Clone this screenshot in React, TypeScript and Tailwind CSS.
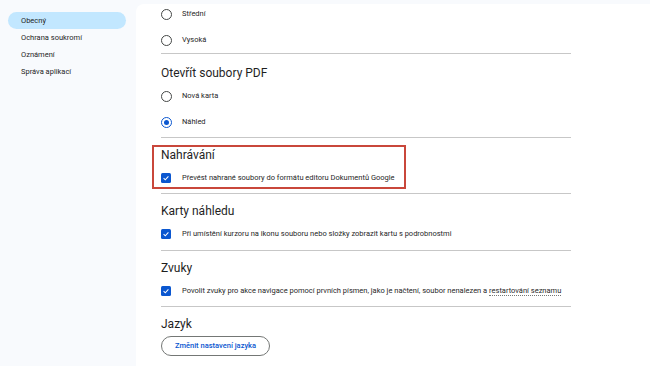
import React from 'react'

const font = { fontFamily: 'Roboto, "Noto Sans", sans-serif' }

function Radio({ checked = false, label }: { checked?: boolean; label: string }) {
  return (
    <div className="flex h-[26px] items-center">
      <span
        className={
          checked
            ? 'flex h-[11px] w-[11px] items-center justify-center rounded-full border-[1.5px] border-[#0b57d0]'
            : 'flex h-[11px] w-[11px] items-center justify-center rounded-full border-[1.5px] border-[#444746]'
        }
      >
        {checked && <span className="h-[5px] w-[5px] rounded-full bg-[#0b57d0]" />}
      </span>
      <span className="ml-[10px] text-[7.5px] text-[#1f1f1f]">{label}</span>
    </div>
  )
}

function Check({ children }: { children: React.ReactNode }) {
  return (
    <div className="flex h-[26px] items-center">
      <span className="flex h-[10px] w-[10px] shrink-0 items-center justify-center rounded-[1.5px] bg-[#0b57d0]">
        <svg viewBox="0 0 10 10" className="h-[8px] w-[8px]">
          <path d="M2 5.2 L4.1 7.2 L8 3" fill="none" stroke="white" strokeWidth="1.3" />
        </svg>
      </span>
      <span className="ml-[11px] whitespace-nowrap text-[7.5px] text-[#1f1f1f]">{children}</span>
    </div>
  )
}

function Divider() {
  return <div className="h-px w-[410px] bg-[#c7c7c7]" />
}

function Heading({ children }: { children: React.ReactNode }) {
  return <div className="mb-[2px] pt-[9px] text-[12px] leading-[16px] text-[#1f1f1f]">{children}</div>
}

const nav = ['Obecný', 'Ochrana soukromí', 'Oznámení', 'Správa aplikací']

export default function App() {
  return (
    <div className="flex h-[366px] w-[650px] overflow-hidden bg-[#f8fafd]" style={font}>
      {/* Sidebar */}
      <aside className="w-[136px] shrink-0 pt-[12px]">
        <ul className="flex flex-col">
          {nav.map((item, i) => (
            <li
              key={item}
              className={
                i === 0
                  ? 'ml-[8px] mr-[10px] flex h-[17px] items-center rounded-full bg-[#c2e7ff] pl-[13px] text-[7.5px] text-[#1f1f1f]'
                  : 'flex h-[17px] items-center pl-[21px] text-[7.5px] text-[#1f1f1f]'
              }
            >
              {item}
            </li>
          ))}
        </ul>
      </aside>

      {/* Main panel */}
      <main className="mt-[4px] flex-1 rounded-tl-[8px] bg-white pl-[25px]">
        <div className="-mt-[3px]">
          <Radio label="Střední" />
          <Radio label="Vysoká" />
        </div>
        <Divider />

        <div className="h-[29px] pt-[11px] text-[12px] leading-[16px] text-[#1f1f1f]">Otevřít soubory PDF</div>
        <Radio label="Nová karta" />
        <Radio checked label="Náhled" />
        <div className="h-[2px]" />

        <section className="relative">
          <Divider />
          <Heading>Nahrávání</Heading>
          <Check>Převést nahrané soubory do formátu editoru Dokumentů Google</Check>
          <div className="h-[2px]" />
          <div className="absolute left-[-9px] top-[8px] h-[44px] w-[254px] border-2 border-[#c9473b]" />
        </section>

        <section>
          <Divider />
          <Heading>Karty náhledu</Heading>
          <Check>Při umístění kurzoru na ikonu souboru nebo složky zobrazit kartu s podrobnostmi</Check>
          <div className="h-[3px]" />
        </section>

        <section>
          <Divider />
          <Heading>Zvuky</Heading>
          <Check>
            Povolit zvuky pro akce navigace pomocí prvních písmen, jako je načtení, soubor nenalezen a{' '}
            <span className="border-b border-dotted border-[#747775]">restartování seznamu</span>
          </Check>
          <div className="h-[2px]" />
        </section>

        <section>
          <Divider />
          <Heading>Jazyk</Heading>
          <button className="mt-[4px] flex h-[20px] w-[109px] items-center justify-center rounded-full border border-[#747775] text-[7.5px] font-medium text-[#0b57d0]">
            Změnit nastavení jazyka
          </button>
        </section>
      </main>
    </div>
  )
}
